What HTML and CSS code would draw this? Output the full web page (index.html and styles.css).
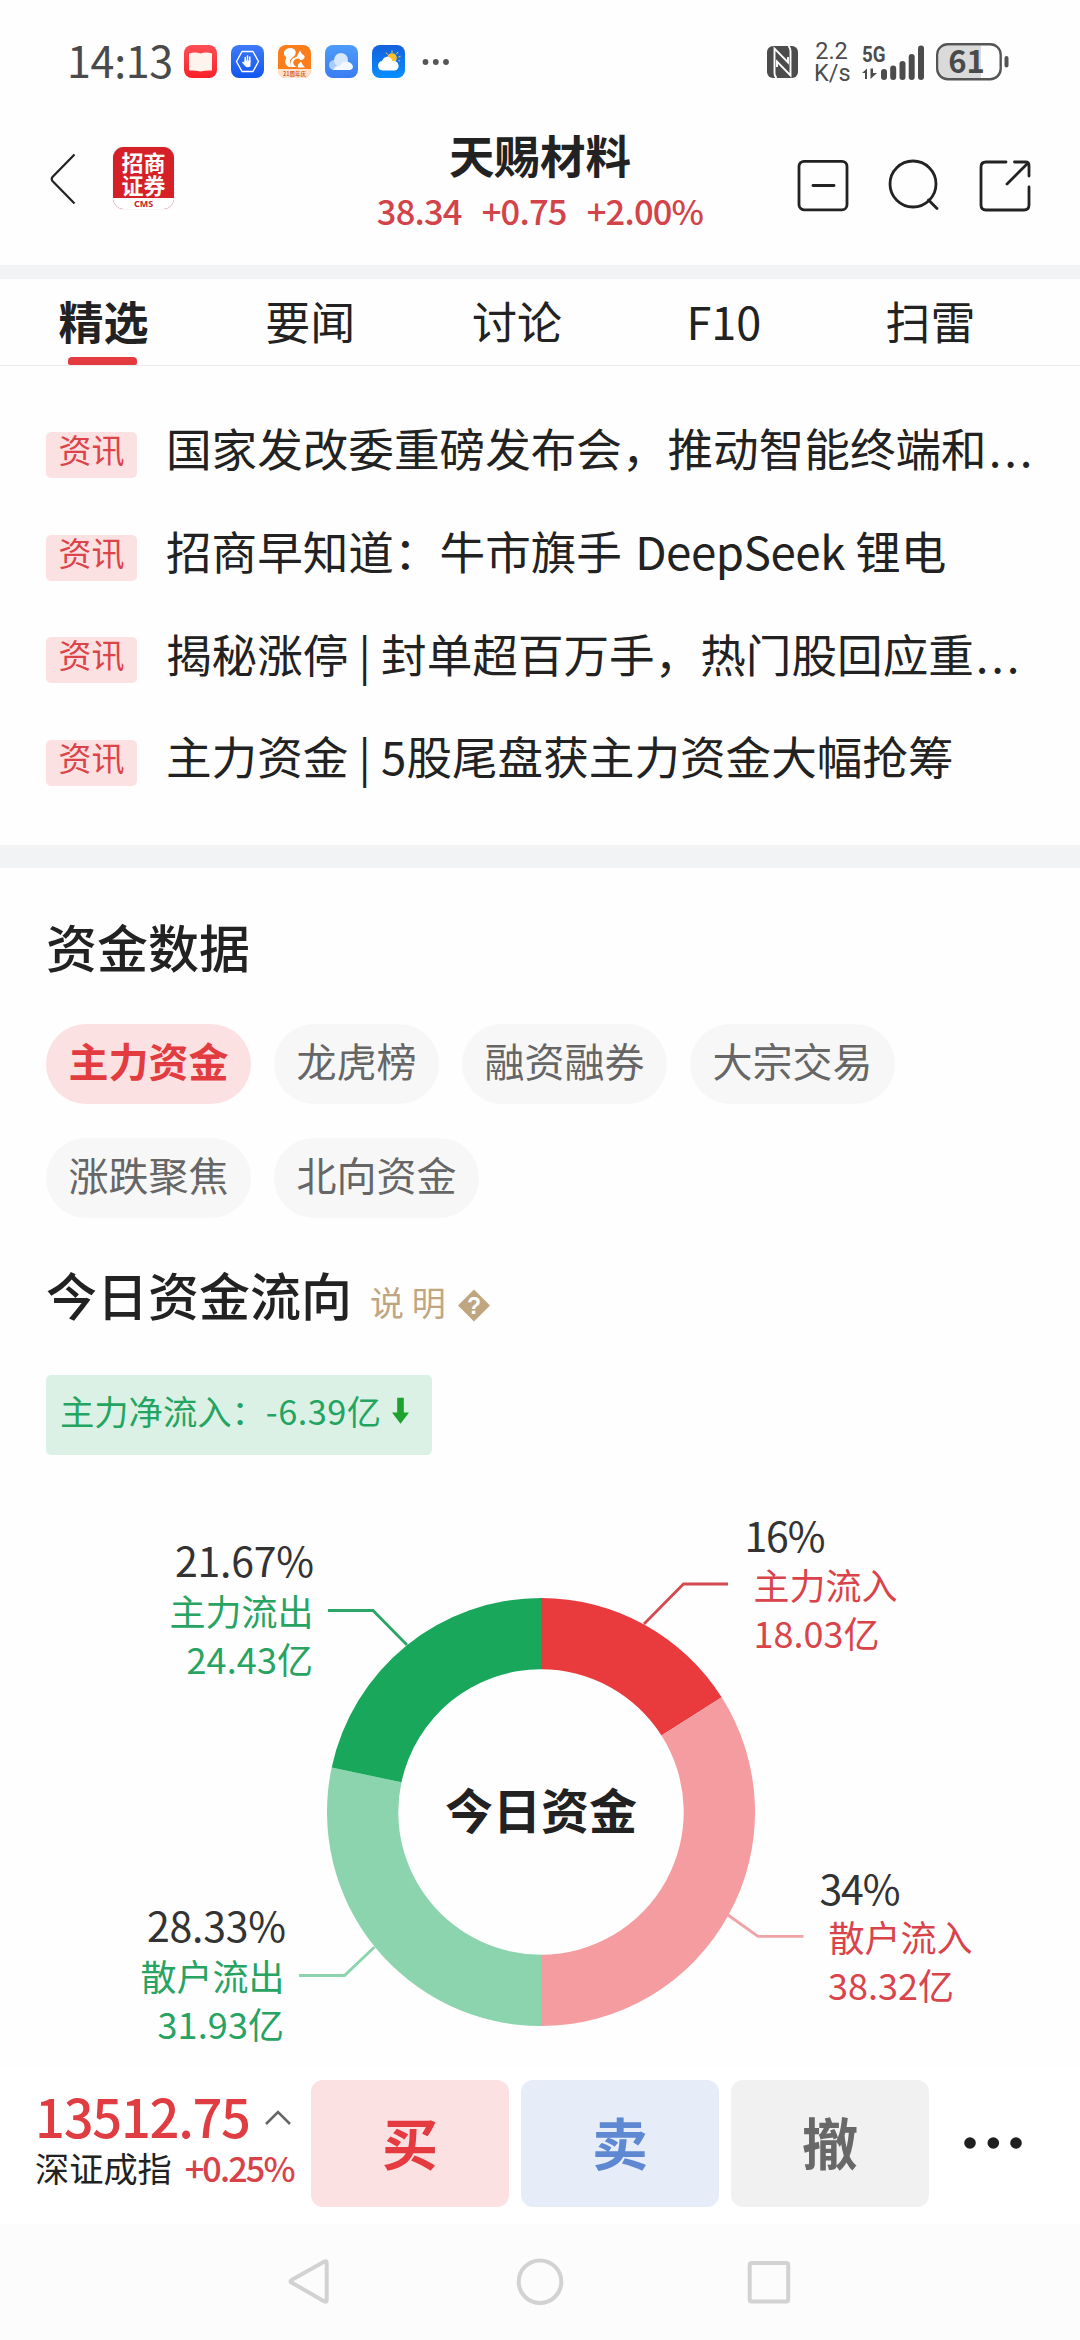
FILE: index.html
```html
<!DOCTYPE html>
<html lang="zh-CN">
<head>
<meta charset="utf-8">
<title>天赐材料</title>
<link rel="stylesheet" href="styles.css">
</head>
<body>
<div class="status">
  <span class="time">14:13</span>
  <div class="apps">
    <svg viewBox="0 0 33 33"><defs><linearGradient id="gr" x2="0" y2="1"><stop stop-color="#fd5056"/><stop offset="1" stop-color="#fb2029"/></linearGradient></defs><rect width="33" height="33" rx="8" fill="url(#gr)"/><path d="M5 8.500q6-2 11.500 0q5.500-2 11.500 0v17q-6-.5-11.500 1q-5.500-1.500-11.500-1z" fill="#fff3ee"/></svg>
    <svg viewBox="0 0 33 33"><defs><linearGradient id="gb" x2="0" y2="1"><stop stop-color="#3f7af8"/><stop offset="1" stop-color="#1256ee"/></linearGradient></defs><rect width="33" height="33" rx="8" fill="url(#gb)"/><path d="M11 6.500h11l5.500 10-5.500 10h-11l-5.500-10z" fill="none" stroke="#fff" stroke-width="1.400" stroke-linejoin="round"/><path d="M14.200 17v-4.500M16.500 17v-6M18.800 17v-5" stroke="#fff" stroke-width="1.500" stroke-linecap="round"/><path d="M13.500 15.500h6v6q-3 1.500-5 0l-3.500-4 1-1 1.500 1z" fill="#fff"/></svg>
    <svg viewBox="0 0 33 33"><defs><clipPath id="cu"><rect width="33" height="33" rx="8"/></clipPath></defs><g clip-path="url(#cu)"><rect width="33" height="33" fill="#fb7d1c"/><path d="M11 22C6 20 7 15 8.500 12C5 11 5 6 8.500 4C13 1.500 19 4 17.500 9C16.500 12 12.500 13 12 16C11.700 18 12.500 20 14 22z" fill="#fff"/><path d="M12.500 20C12 14.500 15.500 12.500 18.500 12L22 5.500L24 9Q28 11 26 13.500Q24.500 15 22.500 15Q20 12.500 17 14.500Q14 17 16 20Q17 21.500 19 22h-5z" fill="#fff"/><path d="M20 19.500l3-3 1.500 3 2.500 3h-7z" fill="#fff"/><rect y="24" width="33" height="9" fill="#fde3d0"/></g><text x="16.500" y="31" class="uc">21周年庆</text></svg>
    <svg viewBox="0 0 33 33"><defs><linearGradient id="gc" x2="0" y2="1"><stop stop-color="#4d9cfa"/><stop offset="1" stop-color="#3a7df2"/></linearGradient></defs><rect width="33" height="33" rx="8" fill="url(#gc)"/><circle cx="9" cy="20" r="5" fill="#a9cdfd"/><circle cx="16" cy="15" r="7" fill="#d7e7fe"/><path d="M8 25a7 7 0 0 1 7-4c3-8 13-4 13 1a3.500 3.500 0 0 1-3 3z" fill="#f4f8ff"/></svg>
    <svg viewBox="0 0 33 33"><defs><linearGradient id="gw" x2="0" y2="1"><stop stop-color="#1560dc"/><stop offset="1" stop-color="#098eff"/></linearGradient></defs><rect width="33" height="33" rx="8" fill="url(#gw)"/><path d="M20 8V5.500M15.500 9.500l-1.500-2M24.500 9l1.500-2M26.500 12l2-.7M26.500 15.500l1.500.5" stroke="#fbc83b" stroke-width="1"/><circle cx="20" cy="13" r="4.800" fill="#fbbf2c"/><path d="M10.500 25.500a4.800 4.800 0 0 1-.5-9.500c2-6 9-5.500 10.500 0c7-1 8.500 8.500 2 9.500z" fill="#fff"/></svg>
  </div>
  <svg class="more" viewBox="0 0 28 8" fill="#555"><circle cx="3.500" cy="4" r="2.900"/><circle cx="13.800" cy="4" r="2.900"/><circle cx="24" cy="4" r="2.900"/></svg>
  <div class="sys">
    <svg class="nfc" viewBox="0 0 31 32"><rect width="31" height="32" rx="6" fill="#4c4c4c"/><path d="M9.500 32Q7.500 30 7.500 27V2.500L21 16.500V11M21.500 0Q23.500 2 23.500 5V29.500L10 15.500V21" fill="none" stroke="#fefefe" stroke-width="1.900"/><path d="M11 24v8h7z" fill="#4c4c4c"/></svg>
    <div class="speed"><span>2.2</span><span>K/s</span></div>
    <svg class="signal" viewBox="0 0 62 36" fill="#4c4c4c"><text x="0" y="18" class="g5" textLength="23.500" lengthAdjust="spacingAndGlyphs">5G</text><path d="M0 29l5-4.500v10.500H3V29zM8.500 24.500h2.500v4.500h4l-6.500 6z"/><rect x="19" y="25" width="6" height="11" rx="3"/><rect x="28.200" y="21.500" width="6" height="14.500" rx="3"/><rect x="37.500" y="17" width="6" height="19" rx="3"/><rect x="46.700" y="10" width="6" height="26" rx="3"/><rect x="56" y="1.500" width="6" height="34.500" rx="3"/></svg>
    <svg class="battery" viewBox="0 0 74 38"><path d="M11 2.500h34v33h-34q-8 0-8-9v-15q0-9 8-9z" fill="#dadada"/><rect x="1.200" y="1.200" width="63.500" height="35" rx="10.500" fill="none" stroke="#555" stroke-width="2.400"/><rect x="68.500" y="13" width="4" height="11.500" rx="2" fill="#555"/><text x="30.500" y="30" class="pct">61</text></svg>
  </div>
</div>

<header class="header">
  <svg class="back" viewBox="0 0 26 52"><path d="M24.500 1.500L2.500 24Q1 26 2.500 28L24.500 50.500" fill="none" stroke="#222" stroke-width="2.200"/></svg>
  <div class="logo"><div class="logo-name">招商<br>证券</div><div class="logo-cms">CMS</div></div>
  <div class="stock">
    <h1>天赐材料</h1>
    <div class="quote"><span>38.34</span><span>+0.75</span><span>+2.00%</span></div>
  </div>
  <svg class="tools" viewBox="0 0 236 54" fill="none" stroke="#222" stroke-width="2.800" stroke-linecap="round" stroke-linejoin="round"><rect x="2" y="2.400" width="48" height="48.400" rx="5"/><path d="M16 26.500h21"/><ellipse cx="116" cy="25" rx="23" ry="23"/><path d="M131.500 41l8.500 8.500"/><path d="M209 3h-20q-5 0-5 5v38q0 5 5 5h38q5 0 5-5V28M217.500 3h11q3.500 0 3.500 3.500V17M231 4L210 25"/></svg>
</header>

<nav class="tabs"><div class="tab on">精选</div><div class="tab">要闻</div><div class="tab">讨论</div><div class="tab f10">F10</div><div class="tab">扫雷</div></nav>

<section class="news">
  <div class="item"><span class="tag">资讯</span><p>国家发改委重磅发布会，推动智能终端和<span class="dots">...</span></p></div>
  <div class="item"><span class="tag">资讯</span><p>招商早知道：牛市旗手 <span class="en">DeepSeek</span> 锂电</p></div>
  <div class="item"><span class="tag">资讯</span><p>揭秘涨停 | 封单超百万手，热门股回应重<span class="dots">...</span></p></div>
  <div class="item"><span class="tag">资讯</span><p>主力资金 | 5股尾盘获主力资金大幅抢筹</p></div>
</section>

<main class="fund">
  <h2>资金数据</h2>
  <div class="chips"><span class="chip on">主力资金</span><span class="chip">龙虎榜</span><span class="chip">融资融券</span><span class="chip">大宗交易</span><span class="chip">涨跌聚焦</span><span class="chip">北向资金</span></div>
  <div class="flow-head"><h2>今日资金流向</h2><span class="explain">说 明</span><svg class="help" viewBox="0 0 32 33"><path d="M16 0.500L32 16.500L16 32.500L0 16.500z" fill="#bfa681"/><text x="16" y="24.500" class="qm">?</text></svg></div>
  <div class="net"><span>主力净流入：</span><span class="net-val">-6.39亿</span><svg viewBox="0 0 18 28"><path d="M5.500 0h7v15.500h5.500L9 27.500L0 15.500h5.500z" fill="#1fa12e"/></svg></div>
</main>

<svg class="chart" viewBox="0 1455 1080 611">
  <path d="M541 1598A214 214 0 0 1 721.690 1697.330L661.490 1735.540A142.700 142.700 0 0 0 541 1669.300z" fill="#e93a3e"/>
  <path d="M721.690 1697.330A214 214 0 0 1 541 2026V1954.700A142.700 142.700 0 0 0 661.490 1735.540z" fill="#f59ca0"/>
  <path d="M541 2026A214 214 0 0 1 331.670 1767.520L401.410 1782.340A142.700 142.700 0 0 0 541 1954.700z" fill="#8bd4ad"/>
  <path d="M331.670 1767.520A214 214 0 0 1 541 1598V1669.300A142.700 142.700 0 0 0 401.410 1782.340z" fill="#19a85b"/>
  <g fill="none" stroke-width="2.800">
    <path d="M644 1624L683.500 1584H728" stroke="#d34b50"/>
    <path d="M728 1915L758 1936.300H803.500" stroke="#efa3a7"/>
    <path d="M374.500 1947L344.500 1975.500H299" stroke="#8bd4ad"/>
    <path d="M407 1645L373 1610.500H328" stroke="#2aa565"/>
  </g>
  <text class="center" x="541" y="1829">今日资金</text>
  <g class="pc">
    <text x="744.500" y="1552" textLength="81">16%</text><text x="819.500" y="1905" textLength="81">34%</text>
    <text x="175" y="1577" textLength="139">21.67%</text><text x="147" y="1942.300" textLength="139">28.33%</text>
  </g>
  <g class="lb in">
    <text x="753.500" y="1600">主力流入</text><text x="753.500" y="1647.600" textLength="126">18.03亿</text>
    <text x="828.500" y="1952">散户流入</text><text x="828" y="1999.500" textLength="126">38.32亿</text>
  </g>
  <g class="lb out">
    <text x="169.500" y="1625.500">主力流出</text><text x="186.500" y="1674" textLength="126.500">24.43亿</text>
    <text x="140.500" y="1991">散户流出</text><text x="157.500" y="2038.700" textLength="126.500">31.93亿</text>
  </g>
</svg>

<footer class="trade">
  <div class="index">
    <div class="index-top"><span class="index-val">13512.75</span><svg viewBox="0 0 28 17"><path d="M2 15L14 3L26 15" fill="none" stroke="#666" stroke-width="2.600"/></svg></div>
    <div class="index-sub"><span>深证成指</span><span class="up">+0.25%</span></div>
  </div>
  <div class="btn buy">买</div><div class="btn sell">卖</div><div class="btn cancel">撤</div>
  <svg class="dots3" viewBox="0 0 60 14" fill="#1f1f1f"><circle cx="7" cy="7" r="5.800"/><circle cx="30.300" cy="7" r="5.800"/><circle cx="53" cy="7" r="5.800"/></svg>
</footer>
<svg class="sysnav" viewBox="0 0 1080 116" fill="none" stroke="#d2d2d2" stroke-width="4" stroke-linejoin="round"><path d="M326.700 38.500V76Q326.700 78.500 324.500 77.500L291.500 58.500Q289.500 57.500 291.500 56L324.500 37.500Q326.700 36.500 326.700 38.500z"/><circle cx="540" cy="57.700" r="21.300"/><rect x="749.700" y="39" width="38.500" height="38.500" rx="2"/></svg>
</body>
</html>
```
FILE: styles.css
```css
* { box-sizing: border-box; margin: 0; padding: 0; }
body { width: 1080px; height: 2340px; overflow: hidden; background: #fefefe; color: #222; font-family: "Noto Sans CJK SC", sans-serif; }
svg { display: block; flex: none; }

.status { display: flex; align-items: center; height: 123px; padding-left: 67px; }
.time { width: 117px; padding-bottom: 5px; font-size: 43px; line-height: 60px; color: #4a4a4a; letter-spacing: -.3px; }
.apps { display: flex; gap: 14px; }
.apps svg { width: 33px; height: 33px; }
.uc { font-size: 5.5px; font-weight: 700; fill: #d8641a; text-anchor: middle; }
.more { width: 28px; height: 8px; margin-left: 17px; }
.sys { display: flex; align-items: center; margin-left: 317px; }
.nfc { width: 31px; height: 32px; }
.speed { display: flex; flex-direction: column; width: 35px; margin-left: 16px; font-family: Roboto, sans-serif; font-size: 23.500px; line-height: 22px; text-align: center; color: #4c4c4c; }
.signal { width: 62px; height: 36px; margin-left: 13px; overflow: visible; }
.g5 { font: 700 22px Roboto, sans-serif; }
.battery { width: 74px; height: 38px; margin-left: 12px; overflow: visible; }
.pct { font-size: 31px; font-weight: 700; text-anchor: middle; fill: #4a4a4a; }

.header { display: flex; height: 142px; padding-left: 50px; }
.back { width: 26px; height: 52px; margin-top: 30px; }
.logo { width: 61px; height: 62px; margin: 24px 0 0 37px; border-radius: 11px; background: #d42026; box-shadow: 0 0 1px #aaa; }
.logo-name { height: 51px; padding-top: 3px; font-size: 22px; line-height: 23px; font-weight: 700; text-align: center; color: #fff; }
.logo-cms { height: 11px; border-radius: 0 0 11px 11px; background: #fff; color: #c9252b; font: 700 9px/11px "Noto Sans", sans-serif; text-align: center; }
.stock { width: 366px; margin-left: 183px; padding-top: 1px; text-align: center; }
h1 { font-size: 45.500px; line-height: 60px; font-weight: 700; }
.quote { display: flex; justify-content: center; gap: 20px; font-size: 34.500px; line-height: 50px; margin-top: 1px; color: #d2434a; font-weight: 500; letter-spacing: -.8px; }
.tools { width: 236px; height: 54px; margin: 36px 0 0 74px; }

.tabs { display: flex; height: 101px; border-top: 14px solid #f2f3f5; border-bottom: 1px solid #ececec; }
.tab { position: relative; width: 206.800px; height: 86px; font-size: 45px; line-height: 83px; text-align: center; }
.tab.on { font-weight: 700; }
.tab.on::after { content: ""; position: absolute; left: 68px; bottom: 0; width: 69px; height: 8px; border-radius: 4px 4px 2px 2px; background: #e43b40; }

.news { height: 502px; padding: 30px 0 0 46px; border-bottom: 23px solid #f2f3f5; }
.item { display: flex; align-items: center; height: 102.700px; }
.tag { width: 91px; height: 46px; margin-top: 15px; border-radius: 5px; background: #fce1e2; color: #dc444a; font-size: 33px; line-height: 35px; text-align: center; }
.item p { margin-left: 29px; font-size: 45.600px; line-height: 60px; white-space: nowrap; }
.en { margin-left: 3px; letter-spacing: -.4px; }
.dots { margin-left: 2px; letter-spacing: 2.800px; }

.fund { height: 587px; padding: 45px 46px 0; }
h2 { font-size: 51px; line-height: 66px; font-weight: 500; }
.chips { display: flex; flex-wrap: wrap; gap: 34px 23px; margin-top: 45px; }
.chip { height: 80px; padding: 0 22.500px; border-radius: 40px; background: #f7f7f7; color: #666; font-size: 40px; line-height: 72px; }
.chip.on { background: #fce1e2; color: #e23c41; font-weight: 700; }
.flow-head { display: flex; height: 66px; margin-top: 43px; }
.explain { margin-left: 18px; padding-top: 8px; font-size: 34px; line-height: 66px; color: #bfa681; }
.help { width: 32px; height: 33px; margin: 28px 0 0 12px; }
.qm { font: 700 23px "Liberation Sans", sans-serif; fill: #fff; text-anchor: middle; }
.net { display: flex; width: 386px; height: 80px; margin-top: 48px; padding-left: 14px; border-radius: 5px; background: #dbf1e6; color: #23a561; font-size: 34.300px; line-height: 70px; }
.net-val { letter-spacing: .5px; }
.net svg { width: 17px; height: 28px; margin: 22px 0 0 10px; }

.chart { width: 1080px; height: 611px; }
.center { font-size: 48px; font-weight: 700; text-anchor: middle; fill: #222; }
.pc { font-size: 41px; fill: #333; }
.lb { font-size: 36px; }
.in { fill: #d9444a; }
.out { fill: #27a362; }

.trade { display: flex; align-items: flex-start; height: 158px; padding: 14px 0 0 35px; background: #fff; }
.index { width: 276px; }
.index-top { display: flex; height: 65px; color: #e03d43; }
.index-val { width: 229px; font-size: 52.500px; line-height: 70px; font-weight: 500; letter-spacing: -1.300px; }
.index-top svg { width: 28px; height: 17px; margin-top: 29px; }
.index-sub { display: flex; gap: 13px; font-size: 34.200px; line-height: 44px; white-space: nowrap; }
.up { color: #d8434a; font-weight: 500; letter-spacing: -1.900px; }
.btn { width: 198px; height: 127px; margin-right: 12px; border-radius: 12px; font-size: 56px; line-height: 122px; font-weight: 700; text-align: center; }
.buy { background: #fce1e2; color: #e53b40; }
.sell { background: #e6edf8; color: #5f88d3; }
.cancel { background: #f1f1f1; color: #686868; }
.dots3 { width: 60px; height: 14px; margin: 56px 0 0 22px; }
.sysnav { width: 1080px; height: 116px; background: #fcfcfc; }
```
